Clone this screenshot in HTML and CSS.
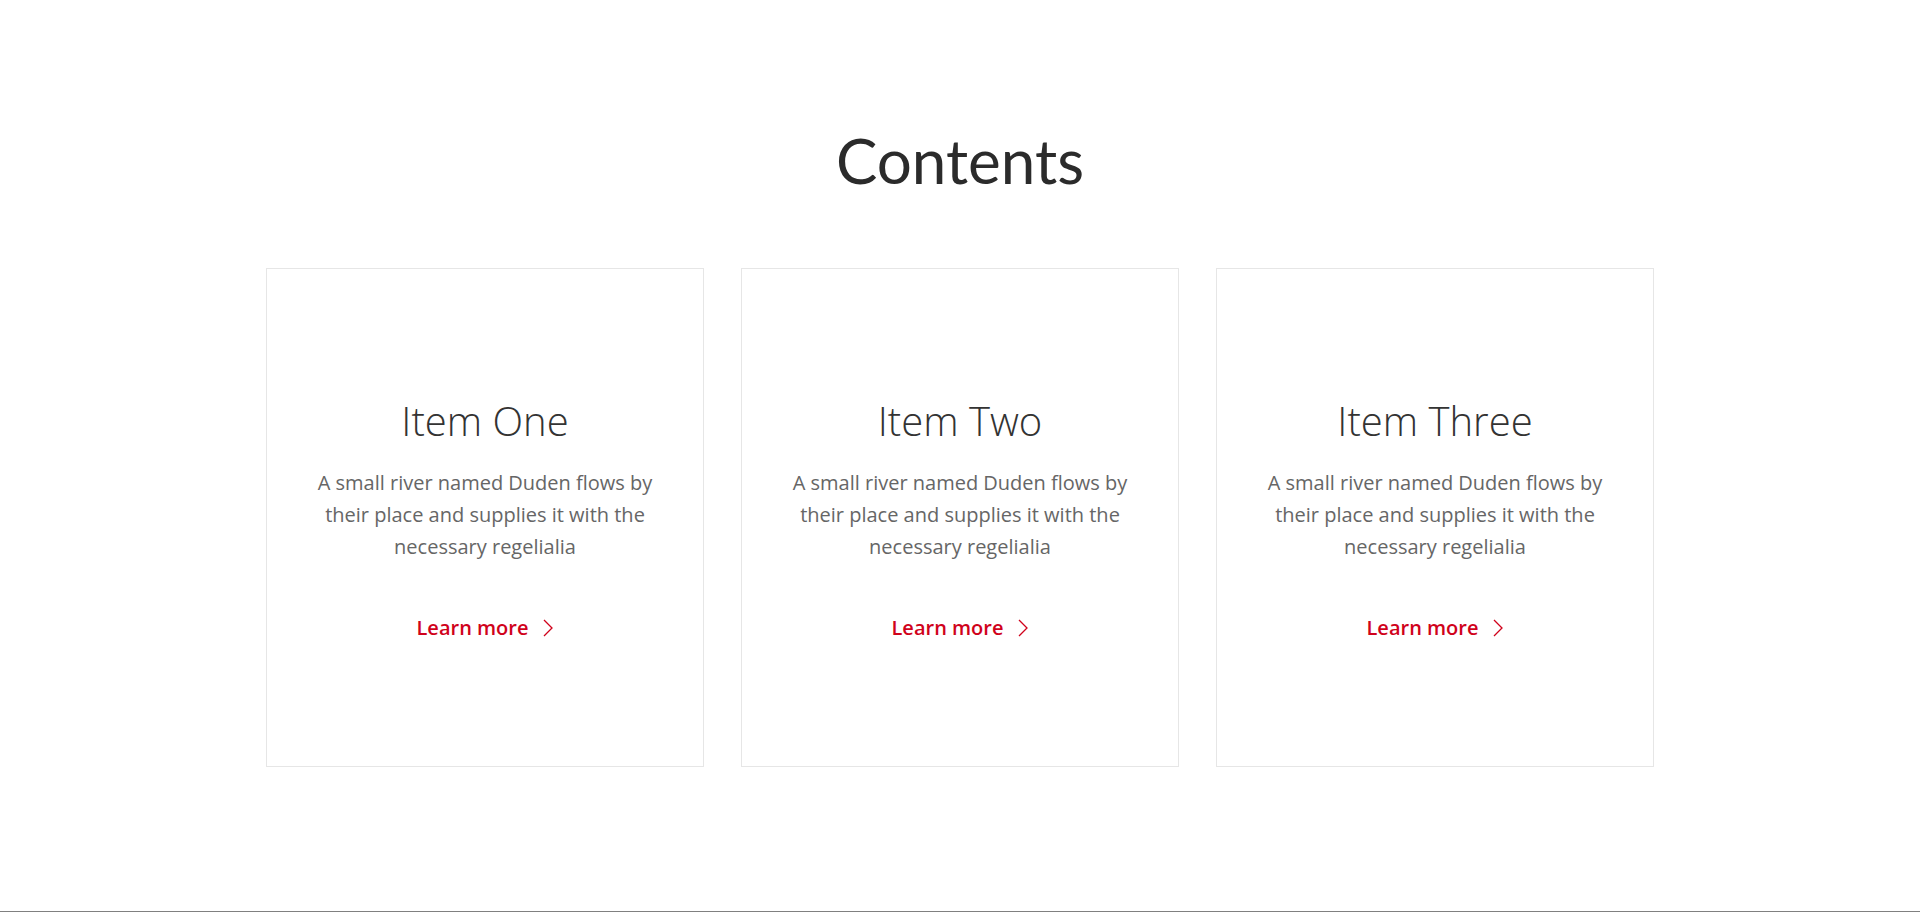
FILE: index.html
```html
<!DOCTYPE html>
<html lang="en">
<head>
    <meta charset="UTF-8">
    <meta name="viewport" content="width=device-width, initial-scale=1.0">
    <title>Contents</title>
    <link rel="stylesheet" href="styles.css">
</head>
<body>
    <section class="contents">
        <h2 class="heading">Contents</h2>

        <div class="cards">
            <div class="card">
                <h3>Item One</h3>
                <p>A small river named Duden flows by their place and supplies it with the necessary regelialia</p>
                <a href="#" class="more">Learn more
                    <svg width="10" height="18" viewBox="0 0 10 18"><path d="M1 1 L9 9 L1 17" fill="none" stroke="currentColor" stroke-width="1.3"/></svg>
                </a>
            </div>
            <div class="card">
                <h3>Item Two</h3>
                <p>A small river named Duden flows by their place and supplies it with the necessary regelialia</p>
                <a href="#" class="more">Learn more
                    <svg width="10" height="18" viewBox="0 0 10 18"><path d="M1 1 L9 9 L1 17" fill="none" stroke="currentColor" stroke-width="1.3"/></svg>
                </a>
            </div>
            <div class="card">
                <h3>Item Three</h3>
                <p>A small river named Duden flows by their place and supplies it with the necessary regelialia</p>
                <a href="#" class="more">Learn more
                    <svg width="10" height="18" viewBox="0 0 10 18"><path d="M1 1 L9 9 L1 17" fill="none" stroke="currentColor" stroke-width="1.3"/></svg>
                </a>
            </div>
        </div>
    </section>
    <footer class="footer"></footer>
</body>
</html>
```

FILE: styles.css
```css
body {
    margin: 0;
    font-family: "Open Sans", sans-serif;
    background: #fff;
}
.contents {
    height: 911px;
    padding-top: 122px;
    box-sizing: border-box;
}
.heading {
    margin: 0;
    text-align: center;
    font-family: Lato, "Open Sans", sans-serif;
    font-weight: 400;
    font-size: 62px;
    line-height: 76px;
    color: #2b2b2b;
}
.cards {
    display: flex;
    justify-content: center;
    gap: 37px;
    margin-top: 70px;
}
.card {
    width: 438px;
    height: 499px;
    box-sizing: border-box;
    border: 1px solid #e6e6e6;
    display: flex;
    flex-direction: column;
    align-items: center;
    justify-content: center;
    text-align: center;
    padding: 0 50px;
}
.card h3 {
    margin: 0;
    font-weight: 300;
    font-size: 40px;
    line-height: 54px;
    color: #333;
}
.card p {
    margin: 19px 0 0;
    font-size: 20px;
    line-height: 32px;
    color: #666;
}
.more {
    margin-top: 51px;
    display: flex;
    align-items: center;
    gap: 15px;
    color: #d0021b;
    font-size: 20px;
    font-weight: 600;
    text-decoration: none;
}
.footer {
    border-top: 1px solid #808080;
}
```
